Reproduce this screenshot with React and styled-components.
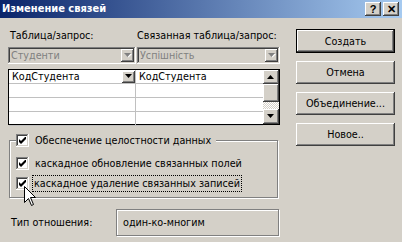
import React from "react";
import styled, { createGlobalStyle } from "styled-components";

const GlobalStyle = createGlobalStyle`
  html, body {
    margin: 0;
    padding: 0;
    background: #d4d0c8;
  }
  body {
    font-family: "DejaVu Sans Condensed", "Liberation Sans", Arial, sans-serif;
    font-size: 10.7px;
    color: #000;
  }
`;

const raised = `
  box-shadow: inset -1px -1px #404040, inset 1px 1px #fff,
    inset -2px -2px #808080, inset 2px 2px #d4d0c8;
`;

const sunken = `
  box-shadow: inset -1px -1px #fff, inset 1px 1px #808080,
    inset -2px -2px #d4d0c8, inset 2px 2px #404040;
`;

const Window = styled.div`
  position: relative;
  width: 402px;
  height: 242px;
  overflow: hidden;
  background: #d4d0c8;
`;

const TitleBar = styled.div`
  display: flex;
  align-items: center;
  height: 18px;
  padding: 0 3px 0 2px;
  background: linear-gradient(to right, #0a246a, #a6caf0);
`;

const Title = styled.div`
  flex: 1;
  color: #fff;
  font-weight: bold;
  font-size: 11px;
  line-height: 18px;
`;

const TitleButton = styled.div`
  width: 16px;
  height: 14px;
  margin-left: ${(p) => (p.$gap ? "2px" : "0")};
  background: #d4d0c8;
  ${raised}
  display: flex;
  align-items: center;
  justify-content: center;
  font-weight: bold;
  font-size: 11px;
  line-height: 1;
  font-family: "Liberation Sans", Arial, sans-serif;
`;

const Body = styled.div`
  display: flex;
  gap: 16px;
  padding: 11px 0 0 8px;
`;

const LeftCol = styled.div`
  width: 272px;
  display: flex;
  flex-direction: column;
`;

const RightCol = styled.div`
  width: 99px;
  display: flex;
  flex-direction: column;
  gap: 8px;
`;

const LabelRow = styled.div`
  display: grid;
  grid-template-columns: 127px 1fr;
  height: 13px;
  line-height: 13px;
  padding-left: 2px;
  margin-bottom: 5px;
  white-space: nowrap;
`;

const ComboRow = styled.div`
  display: grid;
  grid-template-columns: 128px 143px;
  gap: 1px;
  margin-bottom: 5px;
`;

const Combo = styled.div`
  height: 17px;
  display: flex;
  align-items: center;
  justify-content: space-between;
  padding: 2px;
  box-sizing: border-box;
  background: #d4d0c8;
  ${sunken}
`;

const ComboText = styled.span`
  color: #808080;
  padding-left: 1px;
  line-height: 13px;
`;

const DropButton = styled.div`
  width: ${(p) => p.$w || 13}px;
  height: ${(p) => p.$h || 13}px;
  background: #d4d0c8;
  ${raised}
  display: flex;
  align-items: center;
  justify-content: center;
  flex-shrink: 0;
`;

const Grid = styled.div`
  display: flex;
  height: 56px;
  border: 1px solid #000;
  box-sizing: border-box;
  background: #fff;
`;

const Columns = styled.div`
  flex: 1;
  display: grid;
  grid-template-columns: 127px 1fr;
  grid-auto-rows: 14px;
`;

const Cell = styled.div`
  border-right: ${(p) => (p.$last ? "none" : "1px solid #c0c0c0")};
  border-bottom: 1px solid #c0c0c0;
  display: flex;
  align-items: center;
  justify-content: space-between;
  padding-left: 3px;
  line-height: 13px;
`;

const ScrollBar = styled.div`
  width: 16px;
  display: flex;
  flex-direction: column;
  background: repeating-conic-gradient(#fff 0 25%, #d4d0c8 0 50%) 0 0 / 2px 2px;
`;

const ScrollButton = styled.div`
  height: ${(p) => p.$h}px;
  background: #d4d0c8;
  ${raised}
  display: flex;
  align-items: center;
  justify-content: center;
  flex-shrink: 0;
`;

const ScrollGap = styled.div`
  flex: 1;
`;

const GroupBox = styled.div`
  margin: 15px 0 0 1px;
  width: 269px;
  height: 58px;
  border: 1px solid #808080;
  box-shadow: inset 1px 1px #fff, 1px 1px #fff;
  padding: 0 0 0 6px;
  box-sizing: border-box;
`;

const Legend = styled.div`
  margin-top: -7px;
  width: fit-content;
  padding-right: 5px;
  background: #d4d0c8;
  margin-bottom: 10px;
`;

const CheckRow = styled.label`
  display: flex;
  align-items: center;
  gap: ${(p) => (p.$focus ? "4px" : "6px")};
  height: 13px;
  margin-bottom: ${(p) => p.$mb || 0}px;
`;

const Box = styled.span`
  width: 13px;
  height: 13px;
  box-sizing: border-box;
  background: #fff;
  ${sunken}
  display: flex;
  align-items: center;
  justify-content: center;
  flex-shrink: 0;
`;

const CheckText = styled.span`
  line-height: 13px;
  white-space: nowrap;
  padding: ${(p) => (p.$focus ? "1px 1px" : "0")};
  outline: ${(p) => (p.$focus ? "1px dotted #000" : "none")};
`;

const RelationRow = styled.div`
  display: flex;
  align-items: center;
  margin-top: 11px;
`;

const RelationLabel = styled.div`
  width: 105px;
  padding-left: 3px;
`;

const RelationBox = styled.div`
  width: 163px;
  height: 27px;
  border: 1px solid #808080;
  box-shadow: inset 1px 1px #fff, 1px 1px #fff;
  box-sizing: border-box;
  display: flex;
  align-items: center;
  padding-left: 6px;
`;

const Button = styled.div`
  height: ${(p) => (p.$default ? 24 : 23)}px;
  box-sizing: border-box;
  background: #d4d0c8;
  display: flex;
  align-items: center;
  justify-content: center;
  border: ${(p) => (p.$default ? "1px solid #000" : "none")};
  ${raised}
`;

const Cursor = styled.svg`
  position: absolute;
  left: 24px;
  top: 186px;
`;

const Arrow = ({ down, disabled }) => (
  <svg width="8" height="5" viewBox="0 0 8 5">
    {disabled && <path d="M1 1 H8 L4.5 4.5 Z" fill="#fff" />}
    <path
      d={down ? "M0 0 H7 L3.5 4 Z" : "M0 4 H7 L3.5 0 Z"}
      fill={disabled ? "#808080" : "#000"}
    />
  </svg>
);

const Check = () => (
  <svg width="7" height="7" viewBox="0 0 7 7">
    <path d="M0 2 V5 L2 7 L7 2 V-1 L2 4 Z" fill="#000" />
  </svg>
);

const CheckBox = ({ children, mb, focus }) => (
  <CheckRow $mb={mb} $focus={focus}>
    <Box>
      <Check />
    </Box>
    <CheckText $focus={focus}>{children}</CheckText>
  </CheckRow>
);

export default function App() {
  return (
    <Window>
      <GlobalStyle />
      <TitleBar>
        <Title>Изменение связей</Title>
        <TitleButton>?</TitleButton>
        <TitleButton $gap>✕</TitleButton>
      </TitleBar>
      <Body>
        <LeftCol>
          <LabelRow>
            <span>Таблица/запрос:</span>
            <span>Связанная таблица/запрос:</span>
          </LabelRow>
          <ComboRow>
            <Combo>
              <ComboText>Студенти</ComboText>
              <DropButton>
                <Arrow down disabled />
              </DropButton>
            </Combo>
            <Combo>
              <ComboText>Успішність</ComboText>
              <DropButton>
                <Arrow down disabled />
              </DropButton>
            </Combo>
          </ComboRow>
          <Grid>
            <Columns>
              <Cell>
                КодСтудента
                <DropButton $w={13} $h={12}>
                  <Arrow down />
                </DropButton>
              </Cell>
              <Cell $last>КодСтудента</Cell>
              <Cell />
              <Cell $last />
              <Cell />
              <Cell $last />
              <Cell />
              <Cell $last />
            </Columns>
            <ScrollBar>
              <ScrollButton $h={14}>
                <Arrow />
              </ScrollButton>
              <ScrollButton $h={18} />
              <ScrollGap />
              <ScrollButton $h={15}>
                <Arrow down />
              </ScrollButton>
            </ScrollBar>
          </Grid>
          <GroupBox>
            <Legend>
              <CheckBox>Обеспечение целостности данных</CheckBox>
            </Legend>
            <CheckBox mb={7}>каскадное обновление связанных полей</CheckBox>
            <CheckBox focus>каскадное удаление связанных записей</CheckBox>
          </GroupBox>
          <RelationRow>
            <RelationLabel>Тип отношения:</RelationLabel>
            <RelationBox>один-ко-многим</RelationBox>
          </RelationRow>
        </LeftCol>
        <RightCol>
          <Button $default>Создать</Button>
          <Button>Отмена</Button>
          <Button>Объединение...</Button>
          <Button>Новое..</Button>
        </RightCol>
      </Body>
      <Cursor width="13" height="21" viewBox="0 0 13 21">
        <path
          d="M0.5 0.5 V16.5 L4.5 12.5 L7.5 19.5 L9.5 18.5 L6.5 11.5 H11.5 Z"
          fill="#fff"
          stroke="#000"
          strokeWidth="1"
        />
      </Cursor>
    </Window>
  );
}
